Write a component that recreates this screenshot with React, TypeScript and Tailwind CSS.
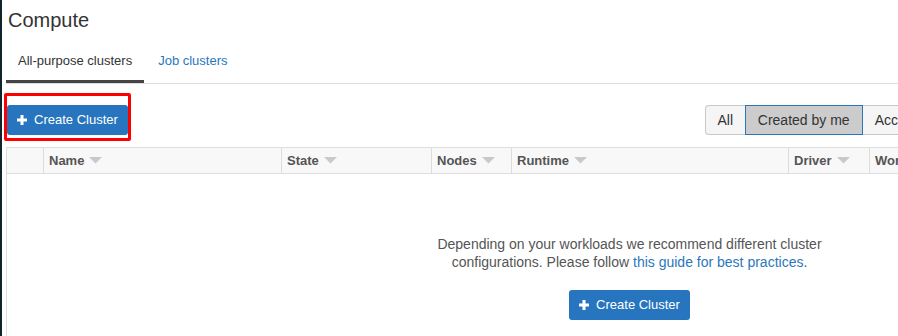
import React from "react";

const Plus = () => (
  <svg width="10" height="10" viewBox="0 0 10 10" className="shrink-0">
    <rect x="3.5" y="0" width="3" height="10" fill="#fff" />
    <rect x="0" y="3.5" width="10" height="3" fill="#fff" />
  </svg>
);

const Caret = () => (
  <svg width="13" height="7" viewBox="0 0 13 7" className="ml-[5px] shrink-0">
    <polygon points="0,0 13,0 6.5,6.5" fill="#c9c9c9" />
  </svg>
);

const CreateButton = () => (
  <button className="flex h-[30px] items-center gap-[7px] rounded-[3px] bg-[#2775be] pl-[10px] pr-[10px] text-[13px] leading-[30px] text-white">
    <Plus />
    <span>Create Cluster</span>
  </button>
);

const cols: { label: string; w: string }[] = [
  { label: "Name", w: "w-[238px]" },
  { label: "State", w: "w-[150px]" },
  { label: "Nodes", w: "w-[80px]" },
  { label: "Runtime", w: "w-[277px]" },
  { label: "Driver", w: "w-[81px]" },
  { label: "Worker", w: "w-[100px]" },
  { label: "Creator", w: "w-[120px]" },
  { label: "Actions", w: "w-[160px]" },
];

export default function App() {
  return (
    <div
      className="relative flex h-[336px] w-[898px] overflow-hidden bg-white text-[#333]"
      style={{ fontFamily: '"Liberation Sans", Arial, sans-serif' }}
    >
      <div className="w-[2px] shrink-0 bg-[#10242e]" />
      <div className="w-[1250px] shrink-0 pl-[4px]">
        <div className="pl-[2px] pt-[9px] text-[20px] leading-[22px] text-[#333]">Compute</div>

        <div className="mt-[9px] flex border-b border-[#dddddd]">
          <div className="border-b-[3px] border-[#444] px-3 pt-[12px] pb-[10px] text-[13px] leading-[18px] text-[#333]">
            All-purpose clusters
          </div>
          <div className="ml-[2px] border-b-[3px] border-transparent px-3 pt-[12px] pb-[10px] text-[13px] leading-[18px] text-[#2a77bd]">
            Job clusters
          </div>
        </div>

        <div className="mt-[21px] flex items-center pl-[1px]">
          <CreateButton />
          <div className="ml-[577px] flex text-[14px] leading-[20px] text-[#333]">
            <div className="w-[40px] rounded-l-[4px] border border-r-0 border-[#c8c8c8] bg-[#f5f5f5] py-[4px] text-center">
              All
            </div>
            <div className="border border-[#2a77bd] bg-[#cccccc] px-3 py-[4px]">Created by me</div>
            <div className="rounded-r-[4px] border border-l-0 border-[#c8c8c8] bg-[#f5f5f5] px-3 py-[4px]">
              Accessible by me
            </div>
          </div>
        </div>

        <div className="mt-[12px] border-l border-t border-[#dddddd]">
          <div className="flex h-[26px] border-b border-[#dddddd] bg-[#f8f8f8] text-[13px] font-bold text-[#555]">
            <div className="w-[36px] shrink-0" />
            {cols.map((c) => (
              <div
                key={c.label}
                className={`${c.w} flex shrink-0 items-center border-l border-[#dddddd] pl-[5px] leading-[25px]`}
              >
                <span>{c.label}</span>
                <Caret />
              </div>
            ))}
          </div>
          <div className="flex h-[200px] flex-col items-center pt-[61px]">
            <p className="text-center text-[14px] leading-[18px] text-[#555]">
              Depending on your workloads we recommend different cluster
              <br />
              configurations. Please follow{" "}
              <a className="text-[#2a77bd]">this guide for best practices</a>.
            </p>
            <div className="mt-[19px]">
              <CreateButton />
            </div>
          </div>
        </div>
      </div>

      <div className="pointer-events-none absolute left-[4px] top-[93px] h-[48px] w-[127px] rounded-[2px] border-[3px] border-[#ff0000]" />
    </div>
  );
}
